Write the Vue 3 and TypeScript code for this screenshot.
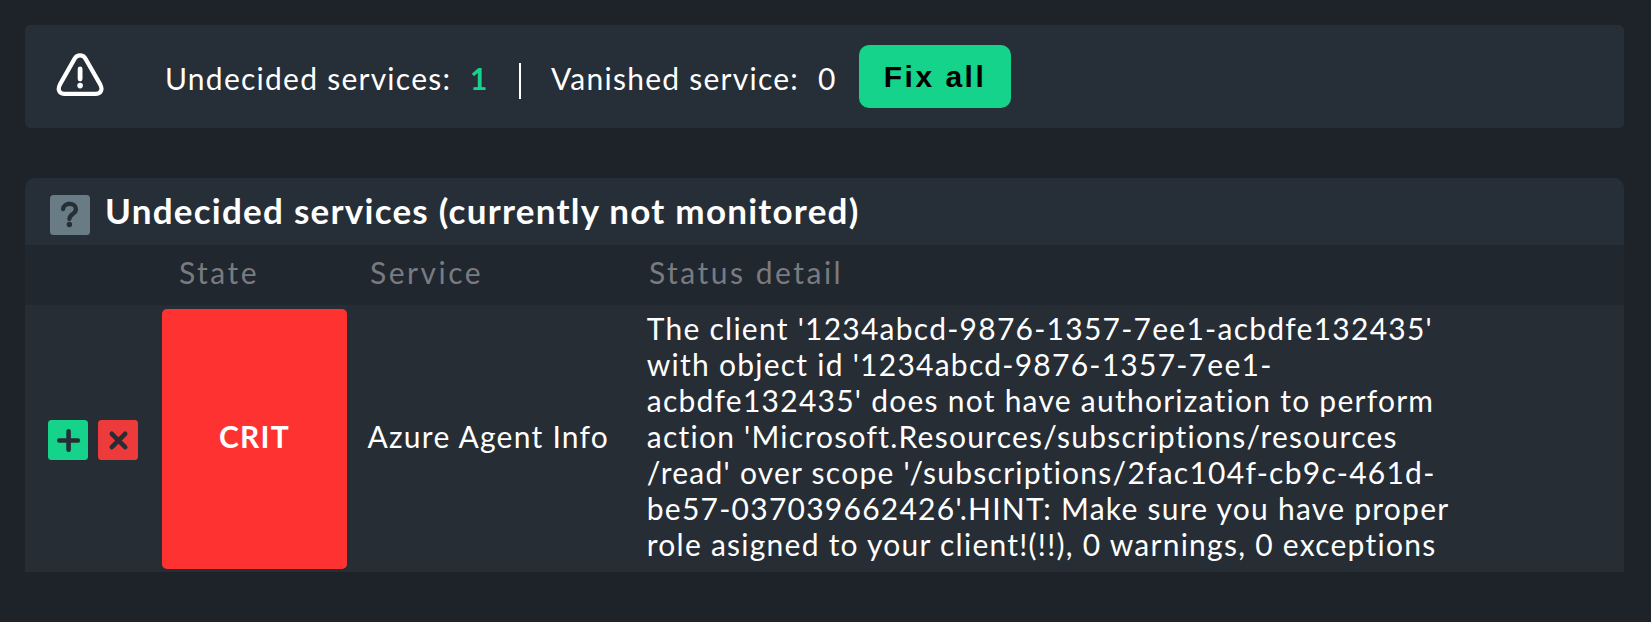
<script setup lang="ts">
interface ServiceRow {
  state: string
  service: string
  detail: string[]
}

const undecided = 1
const vanished = 0

const rows: ServiceRow[] = [
  {
    state: 'CRIT',
    service: 'Azure Agent Info',
    detail: [
      "The client '1234abcd-9876-1357-7ee1-acbdfe132435'",
      "with object id '1234abcd-9876-1357-7ee1-",
      "acbdfe132435' does not have authorization to perform",
      "action 'Microsoft.Resources/subscriptions/resources",
      "/read' over scope '/subscriptions/2fac104f-cb9c-461d-",
      "be57-037039662426'.HINT: Make sure you have proper",
      'role asigned to your client!(!!), 0 warnings, 0 exceptions',
    ],
  },
]
</script>

<template>
  <main class="page">
    <section class="summary">
      <svg class="warning" width="50" height="46" viewBox="0 0 50 46" fill="none">
        <path
          d="M18.8 7.4C21.2 3.4 26.9 3.4 29.3 7.4L44.2 33.4C47.2 39 44.5 42.9 39.4 42.9H8.8C3.7 42.9 1 39 4 33.4Z"
          stroke="#fff"
          stroke-width="4.2"
          stroke-linejoin="round"
        />
        <path d="M24.1 18V28" stroke="#fff" stroke-width="4.8" stroke-linecap="round" />
        <circle cx="24.1" cy="34.6" r="2.8" fill="#fff" />
      </svg>
      <span class="label first">Undecided services:</span>
      <b class="count">{{ undecided }}</b>
      <i class="divider"></i>
      <span class="label second">Vanished service:</span>
      <span class="zero">{{ vanished }}</span>
      <button class="fix" type="button">Fix all</button>
    </section>

    <section class="panel">
      <h2 class="title">
        <svg class="tile" width="40" height="40" viewBox="0 0 40 40" fill="none">
          <rect width="40" height="40" rx="3.5" fill="#697b84" />
          <path
            d="M13.1 14C13.9 7 25.9 7 25.9 14.2C25.9 19.2 19.4 18.8 19.4 24"
            stroke="#262e37"
            stroke-width="4.3"
            stroke-linecap="round"
          />
          <circle cx="19.4" cy="29.5" r="2.7" fill="#262e37" />
        </svg>
        <span class="title-text">Undecided services (currently not monitored)</span>
      </h2>
      <div class="grid head">
        <span></span>
        <span class="h-state">State</span>
        <span class="h-service">Service</span>
        <span class="h-detail">Status detail</span>
      </div>
      <div v-for="row in rows" :key="row.service" class="grid row">
        <div class="actions">
          <svg width="40" height="40" viewBox="0 0 40 40">
            <rect width="40" height="40" rx="3.5" fill="#15d38a" />
            <path d="M11.3 20.5H29.9M20.6 11.2V29.8" stroke="#262e35" stroke-width="4.6" stroke-linecap="round" />
          </svg>
          <svg width="40" height="40" viewBox="0 0 40 40">
            <rect width="40" height="40" rx="3.5" fill="#ed3b3b" />
            <path d="M13.8 13.8L27.2 27.2M27.2 13.8L13.8 27.2" stroke="#262e35" stroke-width="4.6" stroke-linecap="round" />
          </svg>
        </div>
        <div class="state">{{ row.state }}</div>
        <div class="service">{{ row.service }}</div>
        <div class="detail">
          <div v-for="line in row.detail" :key="line">{{ line }}</div>
        </div>
      </div>
    </section>
  </main>
</template>

<style>
body {
  background: #1e2229;
}
</style>

<style scoped>
.page {
  box-sizing: border-box;
  height: 622px;
  padding: 25px 27px 0 25px;
  overflow: hidden;
  background: #1e2229;
  color: #fff;
  font: 30px/36px Lato, sans-serif;
  letter-spacing: 1.25px;
  white-space: nowrap;
}
.summary {
  display: flex;
  align-items: flex-start;
  height: 103px;
  border-radius: 5px;
  background: #262e37;
}
.warning {
  margin: 26px 0 0 31px;
  flex: none;
}
.label,
.count,
.zero {
  margin-top: 35px;
}
.label.first {
  width: 305px;
  margin-left: 59px;
}
.count {
  width: 49px;
  color: #15d38a;
}
.divider {
  width: 2px;
  height: 36px;
  margin-top: 38px;
  background: #fff;
}
.label.second {
  width: 267px;
  margin-left: 30px;
}
.zero {
  width: 41px;
}
.fix {
  width: 152px;
  height: 63px;
  margin: 20px 0 0;
  padding: 0;
  border: 0;
  border-radius: 10px;
  background: #15d38a;
  color: #000;
  font: bold 30px/63px "Liberation Sans", Arial, sans-serif;
  letter-spacing: 2.5px;
}
.panel {
  margin-top: 50px;
  border-radius: 10px 10px 0 0;
  overflow: hidden;
  background: #262d35;
}
.title {
  display: flex;
  height: 67px;
  margin: 0;
  padding-left: 25px;
  background: #262e37;
  font-size: 35px;
  line-height: 42px;
  font-weight: 700;
}
.tile {
  margin-top: 17px;
}
.title-text {
  margin: 11px 0 0 15px;
}
.grid {
  display: grid;
  grid-template-columns: 137px 185px 281px 1fr;
}
.head {
  height: 60px;
  background: #21272f;
  color: #797b80;
  letter-spacing: 2.5px;
  line-height: 54px;
}
.h-state {
  padding-left: 17px;
}
.h-service {
  padding-left: 23px;
}
.h-detail {
  padding-left: 21px;
}
.row {
  height: 267px;
  align-items: center;
}
.actions {
  display: flex;
  gap: 10px;
  padding: 3px 0 0 23px;
}
.state {
  height: 260px;
  margin-top: 1px;
  border-radius: 5px;
  background: #ff3232;
  font-weight: 700;
  line-height: 254px;
  text-align: center;
}
.service {
  padding: 0 0 5px 20.5px;
}
.detail {
  padding: 0 0 5px 18.75px;
}
</style>
